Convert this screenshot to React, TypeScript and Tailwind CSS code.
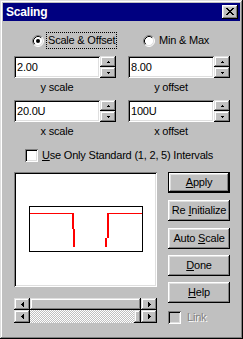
import React from "react";

const RAISED =
  "shadow-[inset_-1px_-1px_0_#000,inset_1px_1px_0_#fff,inset_-2px_-2px_0_#808080,inset_2px_2px_0_#dfdfdf]";
const SCROLLBTN =
  "shadow-[inset_-1px_-1px_0_#000,inset_1px_1px_0_#dfdfdf,inset_-2px_-2px_0_#808080,inset_2px_2px_0_#fff]";
const SUNKEN =
  "shadow-[inset_1px_1px_0_#808080,inset_-1px_-1px_0_#fff,inset_2px_2px_0_#000,inset_-2px_-2px_0_#dfdfdf]";

function Radio({ checked }: { checked?: boolean }) {
  return (
    <svg width="12" height="12" viewBox="0 0 12 12" className="shrink-0">
      <circle cx="6" cy="6" r="5" fill="#fff" />
      <path d="M2.11 9.89A5.5 5.5 0 0 1 9.89 2.11" stroke="#808080" fill="none" />
      <path d="M9.89 2.11A5.5 5.5 0 0 1 2.11 9.89" stroke="#fff" fill="none" />
      <path d="M2.82 9.18A4.5 4.5 0 0 1 9.18 2.82" stroke="#000" fill="none" />
      <path d="M9.18 2.82A4.5 4.5 0 0 1 2.82 9.18" stroke="#dfdfdf" fill="none" />
      {checked && <circle cx="6" cy="6" r="2" fill="#000" />}
    </svg>
  );
}

function Spinner() {
  return (
    <div className="w-[16px] h-[22px] flex flex-col shrink-0">
      <div className={`h-[11px] bg-[#c0c0c0] flex items-center justify-center ${SCROLLBTN}`}>
        <svg width="3" height="2" shapeRendering="crispEdges">
          <rect x="1" y="0" width="1" height="1" fill="#000" />
          <rect x="0" y="1" width="3" height="1" fill="#000" />
        </svg>
      </div>
      <div className={`h-[11px] bg-[#c0c0c0] flex items-center justify-center ${SCROLLBTN}`}>
        <svg width="3" height="2" shapeRendering="crispEdges">
          <rect x="0" y="0" width="3" height="1" fill="#000" />
          <rect x="1" y="1" width="1" height="1" fill="#000" />
        </svg>
      </div>
    </div>
  );
}

function Field({ value }: { value: string }) {
  return (
    <div className="flex">
      <div className={`w-[86px] h-[22px] bg-white flex items-center pl-[3px] ${SUNKEN}`}>
        {value}
      </div>
      <Spinner />
    </div>
  );
}

function Btn({ children, def, className = "" }: { children: React.ReactNode; def?: boolean; className?: string }) {
  if (def) {
    return (
      <div className={`w-[62px] h-[21px] border border-black flex ${className}`}>
        <div className={`flex-1 bg-[#c0c0c0] flex items-center justify-center ${RAISED}`}>{children}</div>
      </div>
    );
  }
  return (
    <div className={`w-[62px] h-[21px] bg-[#c0c0c0] flex items-center justify-center ${RAISED} ${className}`}>
      {children}
    </div>
  );
}

function ArrowLeft() {
  return (
    <svg width="3" height="5" shapeRendering="crispEdges">
      <rect x="0" y="2" width="1" height="1" fill="#000" />
      <rect x="1" y="1" width="1" height="3" fill="#000" />
      <rect x="2" y="0" width="1" height="5" fill="#000" />
    </svg>
  );
}
function ArrowRight() {
  return (
    <svg width="3" height="5" shapeRendering="crispEdges">
      <rect x="0" y="0" width="1" height="5" fill="#000" />
      <rect x="1" y="1" width="1" height="3" fill="#000" />
      <rect x="2" y="2" width="1" height="1" fill="#000" />
    </svg>
  );
}

export default function App() {
  return (
    <div className="w-[243px] h-[339px] bg-[#c0c0c0] p-[3px] shadow-[inset_-1px_-1px_0_#000,inset_1px_1px_0_#dfdfdf,inset_-2px_-2px_0_#808080,inset_2px_2px_0_#fff] font-['Liberation_Sans',Arial,sans-serif] text-[11px] leading-[13px] tracking-[-0.2px] text-black select-none">
      {/* Title bar */}
      <div className="h-[18px] bg-[#000080] flex items-center justify-between pl-[3px] pr-[2px]">
        <span className="text-white font-bold text-[12px] tracking-[-0.2px] leading-[18px]">Scaling</span>
        <div className={`w-[16px] h-[14px] bg-[#c0c0c0] flex items-center justify-center ${RAISED}`}>
          <svg width="8" height="7" shapeRendering="crispEdges" className="mb-px">
            <path
              fill="#000"
              d="M0 0h2v1H0z M6 0h2v1H6z M1 1h2v1H1z M5 1h2v1H5z M2 2h4v1H2z M3 3h2v1H3z M2 4h4v1H2z M1 5h2v1H1z M5 5h2v1H5z M0 6h2v1H0z M6 6h2v1H6z"
            />
          </svg>
        </div>
      </div>

      {/* Radio row */}
      <div className="mt-[11px] h-[17px] flex items-center pl-[29px]">
        <div className="w-[111px] flex items-center">
          <Radio checked />
          <span className="ml-[2px] h-[17px] border border-dotted border-black px-[1px] leading-[15px]">
            Scale &amp; Offset
          </span>
        </div>
        <div className="flex items-center">
          <Radio />
          <span className="ml-[4px] leading-[15px]">Min &amp; Max</span>
        </div>
      </div>

      {/* Row 1 fields */}
      <div className="mt-[7px] flex pl-[11px] gap-[12px]">
        <Field value="2.00" />
        <Field value="8.00" />
      </div>
      <div className="mt-[3px] h-[13px] flex pl-[11px]">
        <div className="w-[86px] text-center">y scale</div>
        <div className="w-[86px] ml-[28px] text-center">y offset</div>
      </div>

      {/* Row 2 fields */}
      <div className="mt-[6px] flex pl-[11px] gap-[12px]">
        <Field value="20.0U" />
        <Field value="100U" />
      </div>
      <div className="mt-[3px] h-[13px] flex pl-[11px]">
        <div className="w-[86px] text-center">x scale</div>
        <div className="w-[86px] ml-[28px] text-center">x offset</div>
      </div>

      {/* Checkbox */}
      <div className="mt-[11px] h-[13px] flex items-center pl-[22px]">
        <div className={`w-[13px] h-[13px] bg-white shrink-0 ${SUNKEN}`} />
        <span className="ml-[4px]">
          <span className="underline">U</span>se Only Standard (1, 2, 5) Intervals
        </span>
      </div>

      {/* Main area */}
      <div className="mt-[10px] flex pl-[11px]">
        <div className="w-[143px] flex flex-col">
          <div className={`h-[115px] bg-white p-[2px] ${SUNKEN}`}>
            <div className="ml-[13px] mt-[32px] w-[114px] h-[46px] border border-black">
              <svg width="112" height="44" shapeRendering="crispEdges" className="block">
                <rect x="0" y="6" width="44" height="1" fill="#f00" />
                <rect x="42" y="6" width="2" height="16" fill="#f00" />
                <rect x="43" y="22" width="2" height="18" fill="#f00" />
                <rect x="75" y="31" width="2" height="9" fill="#f00" />
                <rect x="77" y="6" width="2" height="25" fill="#f00" />
                <rect x="78" y="6" width="34" height="1" fill="#f00" />
              </svg>
            </div>
          </div>
          {/* Scrollbar 1 */}
          <div className="mt-[11px] h-[12px] flex">
            <div className={`w-[16px] bg-[#c0c0c0] flex items-center justify-center ${SCROLLBTN}`}>
              <ArrowLeft />
            </div>
            <div className={`flex-1 bg-[#c0c0c0] ${SCROLLBTN}`} />
            <div className={`w-[16px] bg-[#c0c0c0] flex items-center justify-center ${SCROLLBTN}`}>
              <ArrowRight />
            </div>
          </div>
          {/* Scrollbar 2 */}
          <div className="h-[13px] flex">
            <div className={`w-[16px] bg-[#c0c0c0] flex items-center justify-center ${SCROLLBTN}`}>
              <ArrowLeft />
            </div>
            <div className="flex-1 bg-[repeating-conic-gradient(#c0c0c0_0_25%,#ffffff_0_50%)] bg-[length:2px_2px]" />
            <div className={`w-[7px] bg-[#c0c0c0] ${SCROLLBTN}`} />
            <div className={`w-[16px] bg-[#c0c0c0] flex items-center justify-center ${SCROLLBTN}`}>
              <ArrowRight />
            </div>
          </div>
        </div>

        <div className="ml-[11px] flex flex-col">
          <Btn def>
            <span>
              <span className="underline">A</span>pply
            </span>
          </Btn>
          <Btn className="mt-[7px]">
            <span>
              Re <span className="underline">I</span>nitialize
            </span>
          </Btn>
          <Btn className="mt-[7px]">
            <span>
              Auto <span className="underline">S</span>cale
            </span>
          </Btn>
          <Btn className="mt-[6px]">
            <span>
              <span className="underline">D</span>one
            </span>
          </Btn>
          <Btn className="mt-[6px]">
            <span>
              <span className="underline">H</span>elp
            </span>
          </Btn>
          <div className="mt-[8px] h-[13px] flex items-center">
            <div className={`w-[13px] h-[13px] bg-[#c0c0c0] shrink-0 ${SUNKEN}`} />
            <span className="ml-[6px] text-[#808080] [text-shadow:1px_1px_0_#fff]">Link</span>
          </div>
        </div>
      </div>
    </div>
  );
}
